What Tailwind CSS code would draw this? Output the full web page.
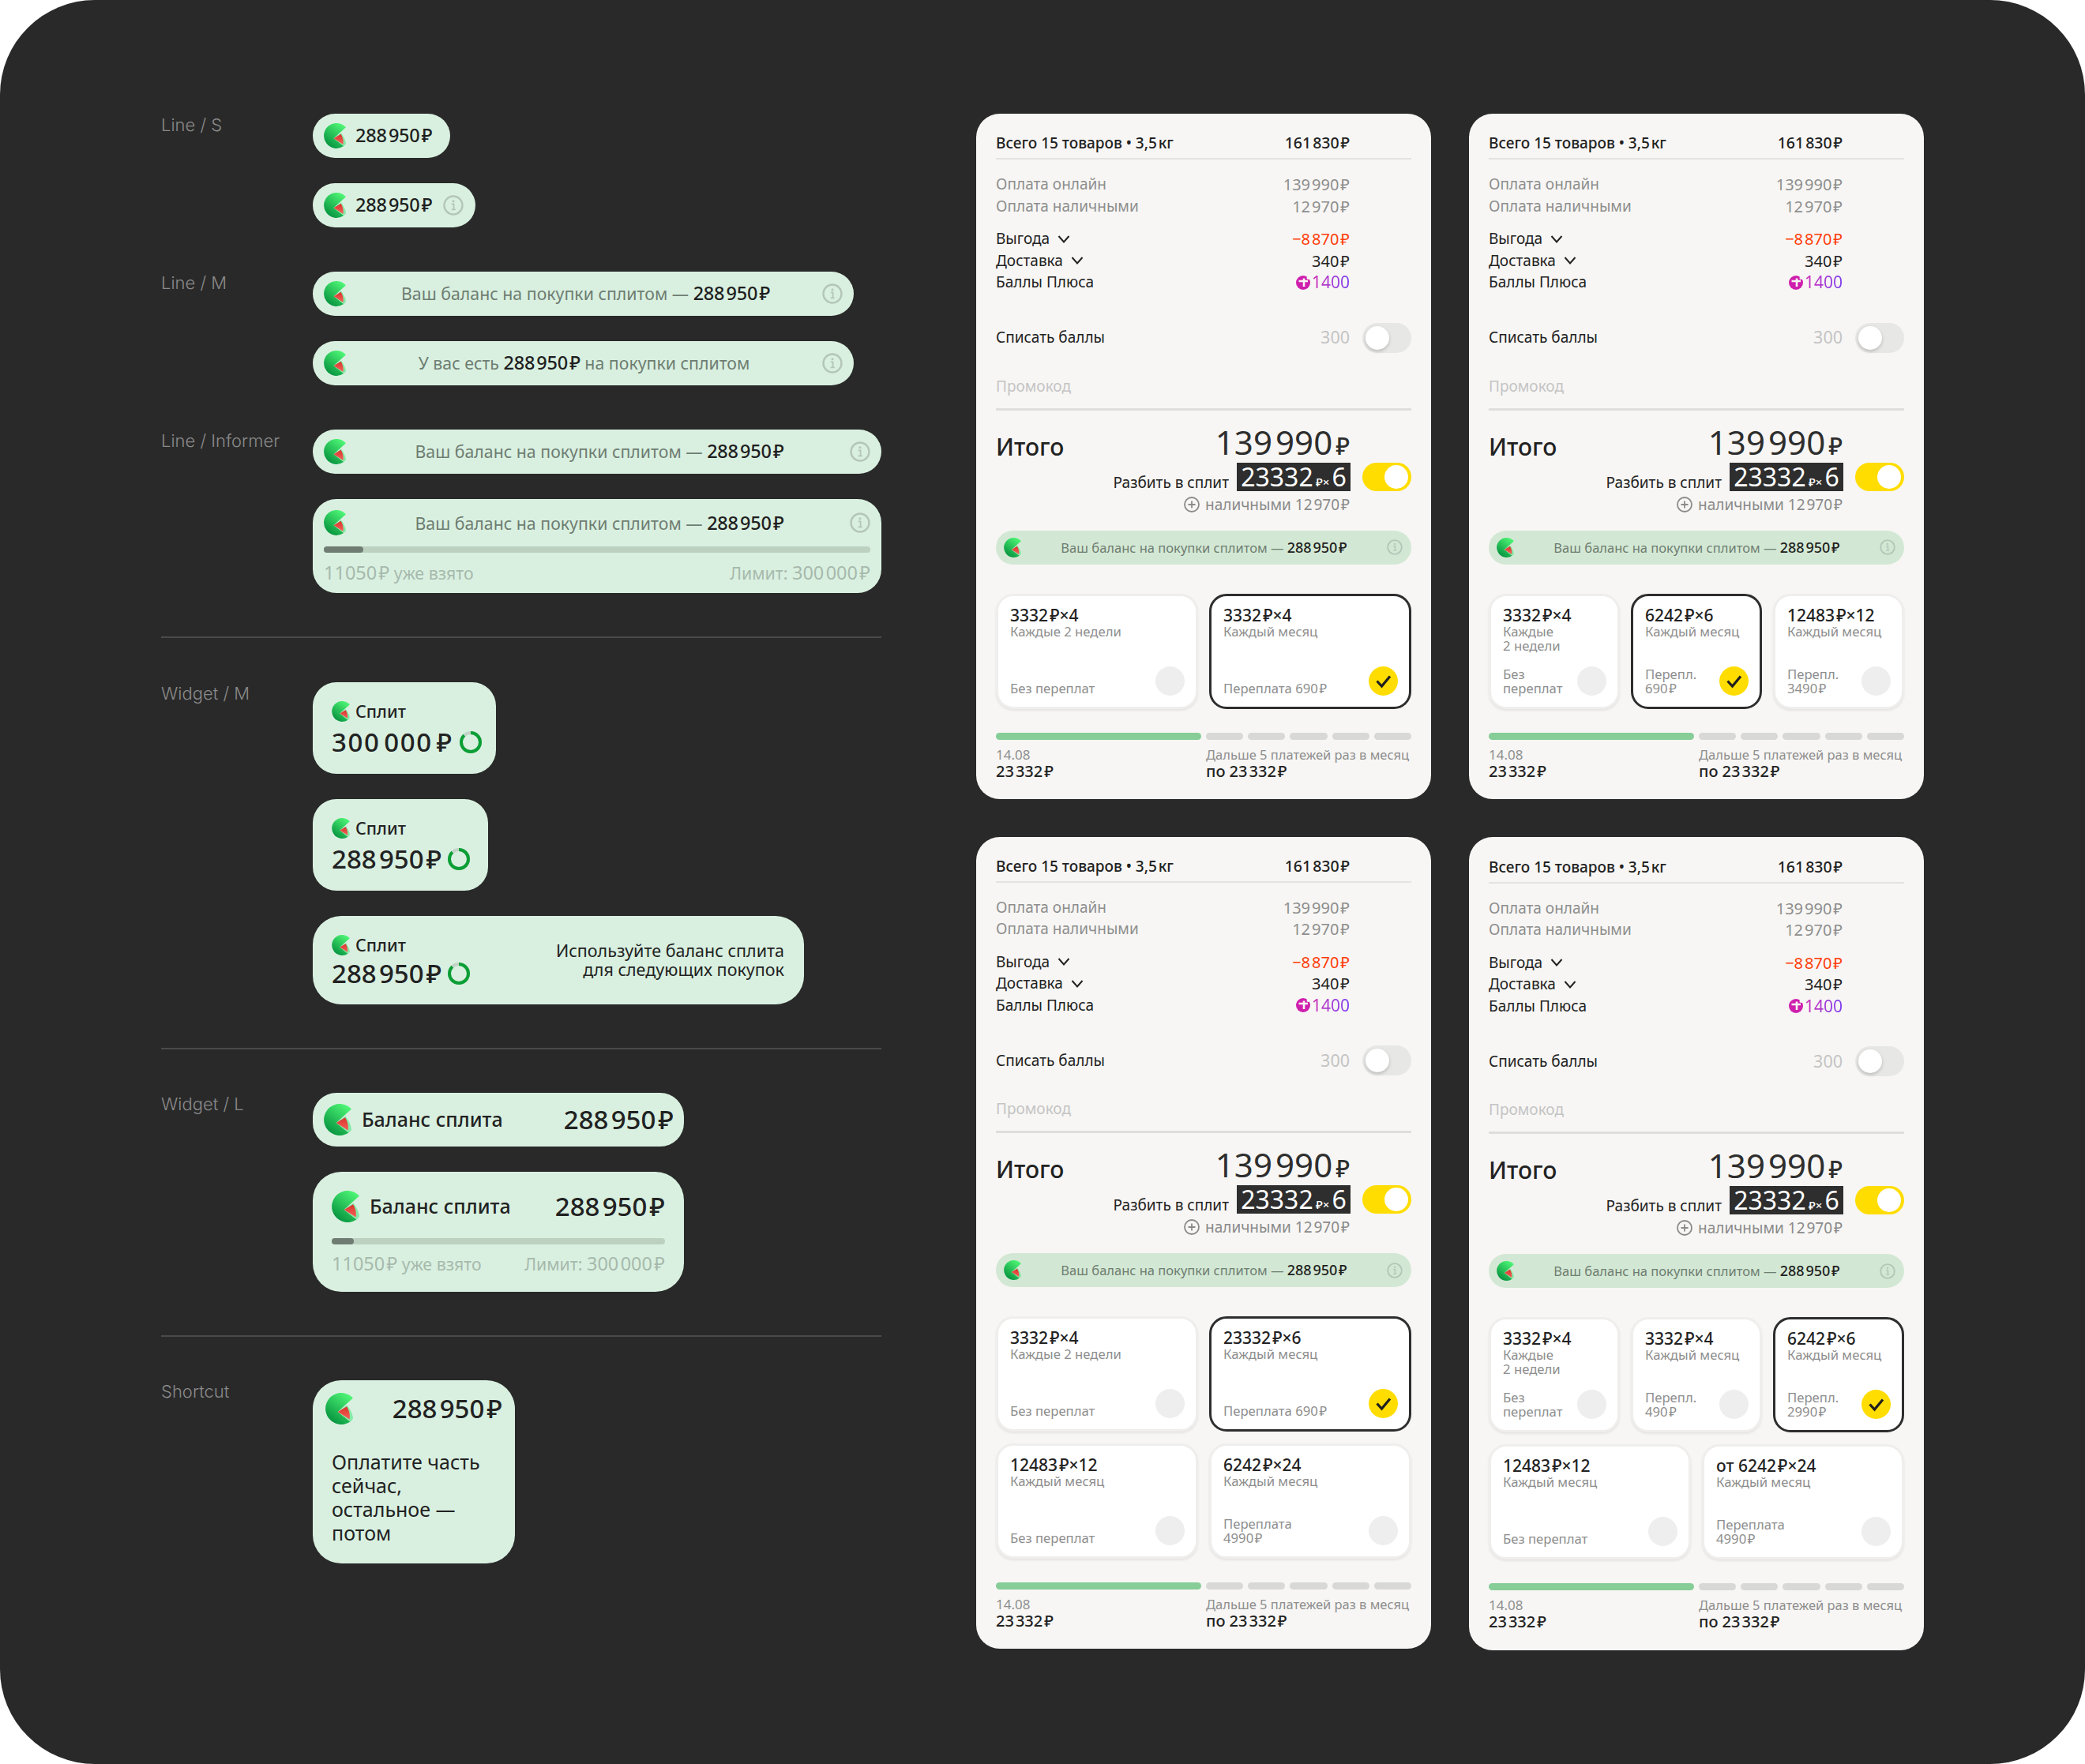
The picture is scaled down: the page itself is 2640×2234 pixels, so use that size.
<!DOCTYPE html>
<html lang="ru">
<head>
<meta charset="utf-8">
<title>Split</title>
<script src="https://cdn.jsdelivr.net/npm/@tailwindcss/browser@4"></script>
</head>
<body class="bg-white [font-family:'Noto_Sans',sans-serif]">
<svg class="absolute w-0 h-0">
  <defs>
    <linearGradient id="g" x1="0.85" y1="0.05" x2="0.25" y2="0.95"><stop offset="0" stop-color="#4ff776"/><stop offset="1" stop-color="#06933f"/></linearGradient>
    <linearGradient id="r" x1="0.6" y1="0" x2="0.6" y2="1"><stop offset="0" stop-color="#d9342b"/><stop offset="1" stop-color="#f4625a"/></linearGradient>
    <symbol id="m" viewBox="0 0 35 40">
      <path d="M35 6.6A20 20 0 1 0 31.5 36.4L15.7 24Z" fill="url(#g)"/>
      <path d="M15.7 24 27.4 15.6C31 20 34.6 27 35 32 34.4 34 33 35.6 31.5 36.4Z" fill="#86eaa8"/>
      <path d="M15.7 24 27 17.2C30 22 31.6 28 30.6 33.6Z" fill="url(#r)"/>
    </symbol>
    <symbol id="i" viewBox="0 0 26 26">
      <circle cx="13" cy="13" r="11.5" fill="none" stroke="currentColor" stroke-width="2.4"/>
      <circle cx="13" cy="7.8" r="1.5" fill="currentColor"/>
      <path d="M10.8 11.4H13.6V18M10.6 18.4H15.8" fill="none" stroke="currentColor" stroke-width="1.8"/>
    </symbol>
    <symbol id="ring" viewBox="0 0 28 28">
      <circle cx="14" cy="14" r="12" fill="none" stroke="#c3d4c7" stroke-width="4"/>
      <circle cx="14" cy="14" r="12" fill="none" stroke="#0a9f35" stroke-width="4" stroke-dasharray="66 76" transform="rotate(-90 14 14)"/>
    </symbol>
    <symbol id="chev" viewBox="0 0 16 12"><path d="M1.5 2 8 9.5 14.5 2" fill="none" stroke="#222" stroke-width="2"/></symbol>
    <symbol id="check" viewBox="0 0 37 37"><path d="M10.5 18.5 16.5 25 27 12.5" fill="none" stroke="#1f1f1f" stroke-width="3.2"/></symbol>
    <symbol id="plus" viewBox="0 0 20 20"><circle cx="10" cy="10" r="9" fill="none" stroke="#8a8a8a" stroke-width="1.8"/><path d="M10 5.5V14.5M5.5 10H14.5" stroke="#8a8a8a" stroke-width="1.8"/></symbol>
    <symbol id="pts" viewBox="0 0 18 18"><path d="M9 0A9 9 0 1 0 18 9 9 9 0 0 0 9 0Z" fill="#cf1fae"/><path d="M3.5 7H15M10 3.5V14" stroke="#f7f6f4" stroke-width="2.6"/><circle cx="15.5" cy="3" r="2" fill="#f7f6f4"/></symbol>
  </defs>
</svg>

<main class="w-[2640px] h-[2234px] rounded-[120px] bg-[#292929] flex gap-[120px] pl-[204px] pt-[144px] overflow-hidden">
  <!-- LEFT -->
  <section class="w-[912px] shrink-0 flex flex-col">
    <div class="flex">
      <h2 class="w-[192px] text-[22px] leading-[28px] font-light text-[#8a8a8a] [font-family:Inter,sans-serif]">Line / S</h2>
      <div class="flex flex-col items-start gap-8">
        <div class="h-14 rounded-full bg-[#d9f0e0] flex items-center pl-[14px] pr-[23px] gap-3"><svg class="w-7 h-8"><use href="#m"/></svg><span class="text-[23.5px] font-medium text-[#1f1f1f] tracking-[-0.2px]">288&#8202;950&#8202;₽</span></div>
        <div class="h-14 rounded-full bg-[#d9f0e0] flex items-center pl-[14px] pr-[15px] gap-3"><svg class="w-7 h-8"><use href="#m"/></svg><span class="text-[23.5px] font-medium text-[#1f1f1f] tracking-[-0.2px]">288&#8202;950&#8202;₽</span><svg class="w-[26px] h-[26px] ml-[2px] text-[#b4c6b8]"><use href="#i"/></svg></div>
      </div>
    </div>
    <div class="flex mt-14">
      <h2 class="w-[192px] text-[22px] leading-[28px] font-light text-[#8a8a8a] [font-family:Inter,sans-serif]">Line / M</h2>
      <div class="flex flex-col gap-8">
        <div class="w-[685px] h-14 rounded-full bg-[#d9f0e0] flex items-center px-[14px]"><svg class="w-7 h-8"><use href="#m"/></svg><p class="flex-1 pl-1 text-center text-[21.3px] text-[#6e7d72]">Ваш баланс на покупки сплитом — <b class="text-[23.5px] font-medium text-[#1f1f1f] tracking-[-0.2px]">288&#8202;950&#8202;₽</b></p><svg class="w-[26px] h-[26px] text-[#b4c6b8]"><use href="#i"/></svg></div>
        <div class="w-[685px] h-14 rounded-full bg-[#d9f0e0] flex items-center px-[14px]"><svg class="w-7 h-8"><use href="#m"/></svg><p class="flex-1 text-center text-[21.3px] text-[#6e7d72]">У вас есть <b class="text-[23.5px] font-medium text-[#1f1f1f] tracking-[-0.2px]">288&#8202;950&#8202;₽</b> на покупки сплитом</p><svg class="w-[26px] h-[26px] text-[#b4c6b8]"><use href="#i"/></svg></div>
      </div>
    </div>
    <div class="flex mt-14">
      <h2 class="w-[192px] text-[22px] leading-[28px] font-light text-[#8a8a8a] [font-family:Inter,sans-serif]">Line / Informer</h2>
      <div class="flex flex-col gap-8">
        <div class="w-[720px] h-14 rounded-full bg-[#d9f0e0] flex items-center px-[14px]"><svg class="w-7 h-8"><use href="#m"/></svg><p class="flex-1 pl-1 text-center text-[21.3px] text-[#6e7d72]">Ваш баланс на покупки сплитом — <b class="text-[23.5px] font-medium text-[#1f1f1f] tracking-[-0.2px]">288&#8202;950&#8202;₽</b></p><svg class="w-[26px] h-[26px] text-[#b4c6b8]"><use href="#i"/></svg></div>
        <div class="w-[720px] h-[119px] rounded-[30px] bg-[#d9f0e0] px-[14px] pt-[14px]">
          <div class="flex items-center h-8"><svg class="w-7 h-8"><use href="#m"/></svg><p class="flex-1 pl-1 text-center text-[21.3px] leading-[32px] text-[#6e7d72]">Ваш баланс на покупки сплитом — <b class="text-[23.5px] font-medium text-[#1f1f1f] tracking-[-0.2px]">288&#8202;950&#8202;₽</b></p><svg class="w-[26px] h-[26px] text-[#b4c6b8]"><use href="#i"/></svg></div>
          <div class="mt-[14px] h-2 rounded-full bg-[#bcd1c0]"><div class="w-[50px] h-2 rounded-full bg-[#6f7c72]"></div></div>
          <div class="mt-[9px] flex justify-between text-[21.3px] leading-[32px] text-[#a7b9ac]"><span><span class="text-[23.5px]">11050&#8202;₽</span> уже взято</span><span>Лимит: <span class="text-[23.5px]">300&#8202;000&#8202;₽</span></span></div>
        </div>
      </div>
    </div>
    <hr class="mt-[55px] border-0 h-[2px] bg-[#4a4a4a]">
    <div class="flex mt-[56px]">
      <h2 class="w-[192px] text-[22px] leading-[28px] font-light text-[#8a8a8a] [font-family:Inter,sans-serif]">Widget / M</h2>
      <div class="flex flex-col items-start gap-8">
        <div class="w-[232px] h-[116px] rounded-[30px] bg-[#d9f0e0] pl-6 pt-6">
          <div class="flex items-center gap-[7px]"><svg class="w-[23px] h-[26px]"><use href="#m"/></svg><span class="text-[21.5px] leading-[26px] font-medium text-[#222]">Сплит</span></div>
          <div class="flex items-center gap-[8px] mt-1"><span class="text-[33px] leading-[44px] font-medium text-[#222] tracking-[1.6px]">300&#8202;000&#8202;₽</span><svg class="w-7 h-7"><use href="#ring"/></svg></div>
        </div>
        <div class="w-[222px] h-[116px] rounded-[30px] bg-[#d9f0e0] pl-6 pt-6">
          <div class="flex items-center gap-[7px]"><svg class="w-[23px] h-[26px]"><use href="#m"/></svg><span class="text-[21.5px] leading-[26px] font-medium text-[#222]">Сплит</span></div>
          <div class="flex items-center gap-[8px] mt-1"><span class="text-[33px] leading-[44px] font-medium text-[#222]">288&#8202;950&#8202;₽</span><svg class="w-7 h-7"><use href="#ring"/></svg></div>
        </div>
        <div class="w-[622px] h-[112px] rounded-[36px] bg-[#d9f0e0] pl-6 pr-[25px] flex items-center justify-between">
          <div class="self-start mt-6">
            <div class="flex items-center gap-[7px]"><svg class="w-[23px] h-[26px]"><use href="#m"/></svg><span class="text-[21.5px] leading-[26px] font-medium text-[#222]">Сплит</span></div>
            <div class="flex items-center gap-[8px] mt-[1px]"><span class="text-[33px] leading-[44px] font-medium text-[#222]">288&#8202;950&#8202;₽</span><svg class="w-7 h-7"><use href="#ring"/></svg></div>
          </div>
          <p class="text-[21.5px] leading-[24px] text-right text-[#222]">Используйте баланс сплита<br>для следующих покупок</p>
        </div>
      </div>
    </div>
    <hr class="mt-[55px] border-0 h-[2px] bg-[#4a4a4a]">
    <div class="flex mt-[55px]">
      <h2 class="w-[192px] text-[22px] leading-[28px] font-light text-[#8a8a8a] [font-family:Inter,sans-serif]">Widget / L</h2>
      <div class="flex flex-col gap-8">
        <div class="w-[470px] h-[68px] rounded-[30px] bg-[#d9f0e0] pl-[14px] pr-[13px] flex items-center"><svg class="w-[35px] h-10"><use href="#m"/></svg><span class="ml-[13px] text-[25px] font-medium text-[#222]">Баланс сплита</span><span class="ml-auto text-[33px] font-medium text-[#222]">288&#8202;950&#8202;₽</span></div>
        <div class="w-[470px] h-[152px] rounded-[36px] bg-[#d9f0e0] px-6 pt-6">
          <div class="flex items-center h-10"><svg class="w-[35px] h-10"><use href="#m"/></svg><span class="ml-[13px] text-[25px] font-medium text-[#222]">Баланс сплита</span><span class="ml-auto text-[33px] font-medium text-[#222]">288&#8202;950&#8202;₽</span></div>
          <div class="mt-5 h-2 rounded-full bg-[#bcd1c0]"><div class="w-7 h-2 rounded-full bg-[#6f7c72]"></div></div>
          <div class="mt-2 flex justify-between text-[21.3px] leading-[32px] text-[#a7b9ac]"><span><span class="text-[23.5px]">11050&#8202;₽</span> уже взято</span><span>Лимит: <span class="text-[23.5px]">300&#8202;000&#8202;₽</span></span></div>
        </div>
      </div>
    </div>
    <hr class="mt-[55px] border-0 h-[2px] bg-[#4a4a4a]">
    <div class="flex mt-[55px]">
      <h2 class="w-[192px] text-[22px] leading-[28px] font-light text-[#8a8a8a] [font-family:Inter,sans-serif]">Shortcut</h2>
      <div class="w-[256px] h-[232px] rounded-[36px] bg-[#d9f0e0] pl-6 pr-4 pt-4">
        <div class="flex items-center h-10 -ml-2"><svg class="w-[35px] h-10"><use href="#m"/></svg><span class="ml-auto text-[33px] font-medium text-[#222]">288&#8202;950&#8202;₽</span></div>
        <p class="mt-8 text-[25px] leading-[30px] text-[#222]">Оплатите часть<br>сейчас,<br>остальное —<br>потом</p>
      </div>
    </div>
  </section>

  <!-- RIGHT -->
  <section class="grid grid-cols-[576px_576px] gap-x-12 gap-y-12 items-start content-start">

    <!-- Card 1 -->
    <article class="rounded-[30px] bg-[#f7f6f4] px-[25px] pt-[23px] pb-[24px] text-[19px] text-[#222]">
      <div class="flex justify-between pr-[78px] leading-[28px] font-medium"><span>Всего 15 товаров • 3,5&#8202;кг</span><span class="text-[19.5px]">161&#8202;830&#8202;₽</span></div>
      <hr class="mt-[5px] mb-[18px] border-0 h-[2px] bg-[#e4e3e1]">
      <div class="flex justify-between pr-[78px] leading-[27.5px] text-[#8e8e8e]"><span>Оплата онлайн</span><span class="text-[20px]">139&#8202;990&#8202;₽</span></div>
      <div class="flex justify-between pr-[78px] leading-[27.5px] text-[#8e8e8e]"><span>Оплата наличными</span><span class="text-[20px]">12&#8202;970&#8202;₽</span></div>
      <div class="mt-[14px] flex justify-between pr-[78px] leading-[27.5px]"><span class="flex items-center gap-[10px]">Выгода<svg class="w-4 h-3"><use href="#chev"/></svg></span><span class="text-[20px] text-[#ff3d0a]">−8&#8202;870&#8202;₽</span></div>
      <div class="flex justify-between pr-[78px] leading-[27.5px]"><span class="flex items-center gap-[10px]">Доставка<svg class="w-4 h-3"><use href="#chev"/></svg></span><span class="text-[20px]">340&#8202;₽</span></div>
      <div class="flex justify-between pr-[78px] leading-[27.5px]"><span>Баллы Плюса</span><span class="flex items-center gap-[2px]"><svg class="w-[18px] h-[18px]"><use href="#pts"/></svg><span class="text-[21px] bg-linear-to-r from-[#d022b4] to-[#7b3cf0] bg-clip-text text-transparent">1400</span></span></div>
      <div class="mt-[37px] flex items-center justify-between h-[38px]"><span>Списать баллы</span><span class="flex items-center gap-4"><span class="text-[21.5px] text-[#c4c4c4]">300</span><span class="w-[62px] h-[38px] rounded-full bg-[#e7e7e5] flex items-center pl-1"><span class="w-[30px] h-[30px] rounded-full bg-white shadow-[0_2px_4px_rgba(0,0,0,0.2)]"></span></span></span></div>
      <p class="mt-[28px] leading-[28px] text-[#c4c4c4]">Промокод</p>
      <hr class="mt-[14px] border-0 h-[3px] bg-[#dfdedc]">
      <div class="mt-[15px] flex justify-between pr-[78px] h-[50px]"><span class="text-[30px] font-medium leading-[62px]">Итого</span><span class="text-[42px] leading-[50px] text-[#2e2e2e]">139&#8202;990&#8202;<span class="text-[30px] font-medium">₽</span></span></div>
      <div class="mt-[1px] h-9 flex items-end justify-end gap-[15px]"><span class="text-[19px] leading-[22px]">Разбить в сплит</span><span class="ml-[-5px] w-[144px] h-9 bg-[#2e2e2e] text-white text-center text-[32px] leading-[36px]">23332&#8202;<span class="text-[15px] font-medium">₽×</span>&#8202;6</span><span class="w-[62px] h-9 rounded-full bg-[#ffdd00] flex items-center justify-end pr-1"><span class="w-[30px] h-[30px] rounded-full bg-white"></span></span></div>
      <div class="mt-[3px] pr-[78px] flex items-center justify-end gap-[7px] text-[19px] leading-[28px] text-[#8a8a8a]"><svg class="w-5 h-5"><use href="#plus"/></svg>наличными 12&#8202;970&#8202;₽</div>
      <div class="mt-[19px] h-[43px] rounded-full bg-[#d3e8d4] flex items-center pl-[10px] pr-[11px]"><svg class="w-[22px] h-[25px]"><use href="#m"/></svg><p class="flex-1 text-center text-[16.5px] text-[#6e7d72]">Ваш баланс на покупки сплитом — <b class="text-[18px] font-medium text-[#1f1f1f]">288&#8202;950&#8202;₽</b></p><svg class="w-5 h-5 text-[#b4c6b8]"><use href="#i"/></svg></div>
      <div class="mt-[37px] grid grid-cols-2 gap-x-[14px] gap-y-[15px]">
        <div class="h-[146px] rounded-[22px] border-[3px] border-[#efeeec] bg-white shadow-[0_2px_3px_rgba(0,0,0,0.08)] pl-[15px] pr-[14px] pt-[12px] pb-[14px] flex flex-col justify-between"><div><p class="text-[21px] leading-[24px] font-medium text-[#222]">3332&#8202;₽×4</p><p class="text-[16.7px] leading-[18px] text-[#8e8e8e]">Каждые 2 недели</p></div><div class="flex items-end justify-between"><p class="text-[16.7px] leading-[18px] text-[#8e8e8e]">Без переплат</p><span class="w-[37px] h-[37px] rounded-full bg-[#eeeeee]"></span></div></div>
        <div class="h-[146px] rounded-[22px] border-[3px] border-[#2e2e2e] bg-white pl-[15px] pr-[14px] pt-[12px] pb-[14px] flex flex-col justify-between"><div><p class="text-[21px] leading-[24px] font-medium text-[#222]">3332&#8202;₽×4</p><p class="text-[16.7px] leading-[18px] text-[#8e8e8e]">Каждый месяц</p></div><div class="flex items-end justify-between"><p class="text-[16.7px] leading-[18px] text-[#8e8e8e]">Переплата 690&#8202;₽</p><svg class="w-[37px] h-[37px] rounded-full bg-[#ffdd00]"><use href="#check"/></svg></div></div>
      </div>
      <div class="mt-[30px] flex gap-[6px]"><span class="w-[260px] h-[9px] rounded-full bg-[#86cd97]"></span><span class="flex-1 h-[9px] rounded-full bg-[#d8d8d6]"></span><span class="flex-1 h-[9px] rounded-full bg-[#d8d8d6]"></span><span class="flex-1 h-[9px] rounded-full bg-[#d8d8d6]"></span><span class="flex-1 h-[9px] rounded-full bg-[#d8d8d6]"></span><span class="flex-1 h-[9px] rounded-full bg-[#d8d8d6]"></span></div>
      <div class="mt-[9px] flex gap-[6px]"><div class="w-[260px] shrink-0"><p class="text-[17px] leading-[20px] text-[#8e8e8e]">14.08</p><p class="text-[20px] leading-[22px] font-medium">23&#8202;332&#8202;₽</p></div><div class="whitespace-nowrap"><p class="text-[16.5px] leading-[20px] text-[#8e8e8e]">Дальше 5 платежей раз в месяц</p><p class="text-[20px] leading-[22px] font-medium">по 23&#8202;332&#8202;₽</p></div></div>
    </article>

    <!-- Card 2 -->
    <article class="rounded-[30px] bg-[#f7f6f4] px-[25px] pt-[23px] pb-[24px] text-[19px] text-[#222]">
      <div class="flex justify-between pr-[78px] leading-[28px] font-medium"><span>Всего 15 товаров • 3,5&#8202;кг</span><span class="text-[19.5px]">161&#8202;830&#8202;₽</span></div>
      <hr class="mt-[5px] mb-[18px] border-0 h-[2px] bg-[#e4e3e1]">
      <div class="flex justify-between pr-[78px] leading-[27.5px] text-[#8e8e8e]"><span>Оплата онлайн</span><span class="text-[20px]">139&#8202;990&#8202;₽</span></div>
      <div class="flex justify-between pr-[78px] leading-[27.5px] text-[#8e8e8e]"><span>Оплата наличными</span><span class="text-[20px]">12&#8202;970&#8202;₽</span></div>
      <div class="mt-[14px] flex justify-between pr-[78px] leading-[27.5px]"><span class="flex items-center gap-[10px]">Выгода<svg class="w-4 h-3"><use href="#chev"/></svg></span><span class="text-[20px] text-[#ff3d0a]">−8&#8202;870&#8202;₽</span></div>
      <div class="flex justify-between pr-[78px] leading-[27.5px]"><span class="flex items-center gap-[10px]">Доставка<svg class="w-4 h-3"><use href="#chev"/></svg></span><span class="text-[20px]">340&#8202;₽</span></div>
      <div class="flex justify-between pr-[78px] leading-[27.5px]"><span>Баллы Плюса</span><span class="flex items-center gap-[2px]"><svg class="w-[18px] h-[18px]"><use href="#pts"/></svg><span class="text-[21px] bg-linear-to-r from-[#d022b4] to-[#7b3cf0] bg-clip-text text-transparent">1400</span></span></div>
      <div class="mt-[37px] flex items-center justify-between h-[38px]"><span>Списать баллы</span><span class="flex items-center gap-4"><span class="text-[21.5px] text-[#c4c4c4]">300</span><span class="w-[62px] h-[38px] rounded-full bg-[#e7e7e5] flex items-center pl-1"><span class="w-[30px] h-[30px] rounded-full bg-white shadow-[0_2px_4px_rgba(0,0,0,0.2)]"></span></span></span></div>
      <p class="mt-[28px] leading-[28px] text-[#c4c4c4]">Промокод</p>
      <hr class="mt-[14px] border-0 h-[3px] bg-[#dfdedc]">
      <div class="mt-[15px] flex justify-between pr-[78px] h-[50px]"><span class="text-[30px] font-medium leading-[62px]">Итого</span><span class="text-[42px] leading-[50px] text-[#2e2e2e]">139&#8202;990&#8202;<span class="text-[30px] font-medium">₽</span></span></div>
      <div class="mt-[1px] h-9 flex items-end justify-end gap-[15px]"><span class="text-[19px] leading-[22px]">Разбить в сплит</span><span class="ml-[-5px] w-[144px] h-9 bg-[#2e2e2e] text-white text-center text-[32px] leading-[36px]">23332&#8202;<span class="text-[15px] font-medium">₽×</span>&#8202;6</span><span class="w-[62px] h-9 rounded-full bg-[#ffdd00] flex items-center justify-end pr-1"><span class="w-[30px] h-[30px] rounded-full bg-white"></span></span></div>
      <div class="mt-[3px] pr-[78px] flex items-center justify-end gap-[7px] text-[19px] leading-[28px] text-[#8a8a8a]"><svg class="w-5 h-5"><use href="#plus"/></svg>наличными 12&#8202;970&#8202;₽</div>
      <div class="mt-[19px] h-[43px] rounded-full bg-[#d3e8d4] flex items-center pl-[10px] pr-[11px]"><svg class="w-[22px] h-[25px]"><use href="#m"/></svg><p class="flex-1 text-center text-[16.5px] text-[#6e7d72]">Ваш баланс на покупки сплитом — <b class="text-[18px] font-medium text-[#1f1f1f]">288&#8202;950&#8202;₽</b></p><svg class="w-5 h-5 text-[#b4c6b8]"><use href="#i"/></svg></div>
      <div class="mt-[37px] grid grid-cols-3 gap-x-[14px] gap-y-[15px]">
        <div class="h-[146px] rounded-[22px] border-[3px] border-[#efeeec] bg-white shadow-[0_2px_3px_rgba(0,0,0,0.08)] pl-[15px] pr-[14px] pt-[12px] pb-[14px] flex flex-col justify-between"><div><p class="text-[21px] leading-[24px] font-medium text-[#222]">3332&#8202;₽×4</p><p class="text-[16.7px] leading-[18px] text-[#8e8e8e]">Каждые<br>2 недели</p></div><div class="flex items-end justify-between"><p class="text-[16.7px] leading-[18px] text-[#8e8e8e]">Без<br>переплат</p><span class="w-[37px] h-[37px] rounded-full bg-[#eeeeee]"></span></div></div>
        <div class="h-[146px] rounded-[22px] border-[3px] border-[#2e2e2e] bg-white pl-[15px] pr-[14px] pt-[12px] pb-[14px] flex flex-col justify-between"><div><p class="text-[21px] leading-[24px] font-medium text-[#222]">6242&#8202;₽×6</p><p class="text-[16.7px] leading-[18px] text-[#8e8e8e]">Каждый месяц</p></div><div class="flex items-end justify-between"><p class="text-[16.7px] leading-[18px] text-[#8e8e8e]">Перепл.<br>690&#8202;₽</p><svg class="w-[37px] h-[37px] rounded-full bg-[#ffdd00]"><use href="#check"/></svg></div></div>
        <div class="h-[146px] rounded-[22px] border-[3px] border-[#efeeec] bg-white shadow-[0_2px_3px_rgba(0,0,0,0.08)] pl-[15px] pr-[14px] pt-[12px] pb-[14px] flex flex-col justify-between"><div><p class="text-[21px] leading-[24px] font-medium text-[#222]">12483&#8202;₽×12</p><p class="text-[16.7px] leading-[18px] text-[#8e8e8e]">Каждый месяц</p></div><div class="flex items-end justify-between"><p class="text-[16.7px] leading-[18px] text-[#8e8e8e]">Перепл.<br>3490&#8202;₽</p><span class="w-[37px] h-[37px] rounded-full bg-[#eeeeee]"></span></div></div>
      </div>
      <div class="mt-[30px] flex gap-[6px]"><span class="w-[260px] h-[9px] rounded-full bg-[#86cd97]"></span><span class="flex-1 h-[9px] rounded-full bg-[#d8d8d6]"></span><span class="flex-1 h-[9px] rounded-full bg-[#d8d8d6]"></span><span class="flex-1 h-[9px] rounded-full bg-[#d8d8d6]"></span><span class="flex-1 h-[9px] rounded-full bg-[#d8d8d6]"></span><span class="flex-1 h-[9px] rounded-full bg-[#d8d8d6]"></span></div>
      <div class="mt-[9px] flex gap-[6px]"><div class="w-[260px] shrink-0"><p class="text-[17px] leading-[20px] text-[#8e8e8e]">14.08</p><p class="text-[20px] leading-[22px] font-medium">23&#8202;332&#8202;₽</p></div><div class="whitespace-nowrap"><p class="text-[16.5px] leading-[20px] text-[#8e8e8e]">Дальше 5 платежей раз в месяц</p><p class="text-[20px] leading-[22px] font-medium">по 23&#8202;332&#8202;₽</p></div></div>
    </article>

    <!-- Card 3 -->
    <article class="rounded-[30px] bg-[#f7f6f4] px-[25px] pt-[23px] pb-[24px] text-[19px] text-[#222]">
      <div class="flex justify-between pr-[78px] leading-[28px] font-medium"><span>Всего 15 товаров • 3,5&#8202;кг</span><span class="text-[19.5px]">161&#8202;830&#8202;₽</span></div>
      <hr class="mt-[5px] mb-[18px] border-0 h-[2px] bg-[#e4e3e1]">
      <div class="flex justify-between pr-[78px] leading-[27.5px] text-[#8e8e8e]"><span>Оплата онлайн</span><span class="text-[20px]">139&#8202;990&#8202;₽</span></div>
      <div class="flex justify-between pr-[78px] leading-[27.5px] text-[#8e8e8e]"><span>Оплата наличными</span><span class="text-[20px]">12&#8202;970&#8202;₽</span></div>
      <div class="mt-[14px] flex justify-between pr-[78px] leading-[27.5px]"><span class="flex items-center gap-[10px]">Выгода<svg class="w-4 h-3"><use href="#chev"/></svg></span><span class="text-[20px] text-[#ff3d0a]">−8&#8202;870&#8202;₽</span></div>
      <div class="flex justify-between pr-[78px] leading-[27.5px]"><span class="flex items-center gap-[10px]">Доставка<svg class="w-4 h-3"><use href="#chev"/></svg></span><span class="text-[20px]">340&#8202;₽</span></div>
      <div class="flex justify-between pr-[78px] leading-[27.5px]"><span>Баллы Плюса</span><span class="flex items-center gap-[2px]"><svg class="w-[18px] h-[18px]"><use href="#pts"/></svg><span class="text-[21px] bg-linear-to-r from-[#d022b4] to-[#7b3cf0] bg-clip-text text-transparent">1400</span></span></div>
      <div class="mt-[37px] flex items-center justify-between h-[38px]"><span>Списать баллы</span><span class="flex items-center gap-4"><span class="text-[21.5px] text-[#c4c4c4]">300</span><span class="w-[62px] h-[38px] rounded-full bg-[#e7e7e5] flex items-center pl-1"><span class="w-[30px] h-[30px] rounded-full bg-white shadow-[0_2px_4px_rgba(0,0,0,0.2)]"></span></span></span></div>
      <p class="mt-[28px] leading-[28px] text-[#c4c4c4]">Промокод</p>
      <hr class="mt-[14px] border-0 h-[3px] bg-[#dfdedc]">
      <div class="mt-[15px] flex justify-between pr-[78px] h-[50px]"><span class="text-[30px] font-medium leading-[62px]">Итого</span><span class="text-[42px] leading-[50px] text-[#2e2e2e]">139&#8202;990&#8202;<span class="text-[30px] font-medium">₽</span></span></div>
      <div class="mt-[1px] h-9 flex items-end justify-end gap-[15px]"><span class="text-[19px] leading-[22px]">Разбить в сплит</span><span class="ml-[-5px] w-[144px] h-9 bg-[#2e2e2e] text-white text-center text-[32px] leading-[36px]">23332&#8202;<span class="text-[15px] font-medium">₽×</span>&#8202;6</span><span class="w-[62px] h-9 rounded-full bg-[#ffdd00] flex items-center justify-end pr-1"><span class="w-[30px] h-[30px] rounded-full bg-white"></span></span></div>
      <div class="mt-[3px] pr-[78px] flex items-center justify-end gap-[7px] text-[19px] leading-[28px] text-[#8a8a8a]"><svg class="w-5 h-5"><use href="#plus"/></svg>наличными 12&#8202;970&#8202;₽</div>
      <div class="mt-[19px] h-[43px] rounded-full bg-[#d3e8d4] flex items-center pl-[10px] pr-[11px]"><svg class="w-[22px] h-[25px]"><use href="#m"/></svg><p class="flex-1 text-center text-[16.5px] text-[#6e7d72]">Ваш баланс на покупки сплитом — <b class="text-[18px] font-medium text-[#1f1f1f]">288&#8202;950&#8202;₽</b></p><svg class="w-5 h-5 text-[#b4c6b8]"><use href="#i"/></svg></div>
      <div class="mt-[37px] grid grid-cols-2 gap-x-[14px] gap-y-[15px]">
        <div class="h-[146px] rounded-[22px] border-[3px] border-[#efeeec] bg-white shadow-[0_2px_3px_rgba(0,0,0,0.08)] pl-[15px] pr-[14px] pt-[12px] pb-[14px] flex flex-col justify-between"><div><p class="text-[21px] leading-[24px] font-medium text-[#222]">3332&#8202;₽×4</p><p class="text-[16.7px] leading-[18px] text-[#8e8e8e]">Каждые 2 недели</p></div><div class="flex items-end justify-between"><p class="text-[16.7px] leading-[18px] text-[#8e8e8e]">Без переплат</p><span class="w-[37px] h-[37px] rounded-full bg-[#eeeeee]"></span></div></div>
        <div class="h-[146px] rounded-[22px] border-[3px] border-[#2e2e2e] bg-white pl-[15px] pr-[14px] pt-[12px] pb-[14px] flex flex-col justify-between"><div><p class="text-[21px] leading-[24px] font-medium text-[#222]">23332&#8202;₽×6</p><p class="text-[16.7px] leading-[18px] text-[#8e8e8e]">Каждый месяц</p></div><div class="flex items-end justify-between"><p class="text-[16.7px] leading-[18px] text-[#8e8e8e]">Переплата 690&#8202;₽</p><svg class="w-[37px] h-[37px] rounded-full bg-[#ffdd00]"><use href="#check"/></svg></div></div>
        <div class="h-[146px] rounded-[22px] border-[3px] border-[#efeeec] bg-white shadow-[0_2px_3px_rgba(0,0,0,0.08)] pl-[15px] pr-[14px] pt-[12px] pb-[14px] flex flex-col justify-between"><div><p class="text-[21px] leading-[24px] font-medium text-[#222]">12483&#8202;₽×12</p><p class="text-[16.7px] leading-[18px] text-[#8e8e8e]">Каждый месяц</p></div><div class="flex items-end justify-between"><p class="text-[16.7px] leading-[18px] text-[#8e8e8e]">Без переплат</p><span class="w-[37px] h-[37px] rounded-full bg-[#eeeeee]"></span></div></div>
        <div class="h-[146px] rounded-[22px] border-[3px] border-[#efeeec] bg-white shadow-[0_2px_3px_rgba(0,0,0,0.08)] pl-[15px] pr-[14px] pt-[12px] pb-[14px] flex flex-col justify-between"><div><p class="text-[21px] leading-[24px] font-medium text-[#222]">6242&#8202;₽×24</p><p class="text-[16.7px] leading-[18px] text-[#8e8e8e]">Каждый месяц</p></div><div class="flex items-end justify-between"><p class="text-[16.7px] leading-[18px] text-[#8e8e8e]">Переплата<br>4990&#8202;₽</p><span class="w-[37px] h-[37px] rounded-full bg-[#eeeeee]"></span></div></div>
      </div>
      <div class="mt-[30px] flex gap-[6px]"><span class="w-[260px] h-[9px] rounded-full bg-[#86cd97]"></span><span class="flex-1 h-[9px] rounded-full bg-[#d8d8d6]"></span><span class="flex-1 h-[9px] rounded-full bg-[#d8d8d6]"></span><span class="flex-1 h-[9px] rounded-full bg-[#d8d8d6]"></span><span class="flex-1 h-[9px] rounded-full bg-[#d8d8d6]"></span><span class="flex-1 h-[9px] rounded-full bg-[#d8d8d6]"></span></div>
      <div class="mt-[9px] flex gap-[6px]"><div class="w-[260px] shrink-0"><p class="text-[17px] leading-[20px] text-[#8e8e8e]">14.08</p><p class="text-[20px] leading-[22px] font-medium">23&#8202;332&#8202;₽</p></div><div class="whitespace-nowrap"><p class="text-[16.5px] leading-[20px] text-[#8e8e8e]">Дальше 5 платежей раз в месяц</p><p class="text-[20px] leading-[22px] font-medium">по 23&#8202;332&#8202;₽</p></div></div>
    </article>

    <!-- Card 4 -->
    <article class="rounded-[30px] bg-[#f7f6f4] px-[25px] pt-[24px] pb-[25px] text-[19px] text-[#222]">
      <div class="flex justify-between pr-[78px] leading-[28px] font-medium"><span>Всего 15 товаров • 3,5&#8202;кг</span><span class="text-[19.5px]">161&#8202;830&#8202;₽</span></div>
      <hr class="mt-[5px] mb-[18px] border-0 h-[2px] bg-[#e4e3e1]">
      <div class="flex justify-between pr-[78px] leading-[27.5px] text-[#8e8e8e]"><span>Оплата онлайн</span><span class="text-[20px]">139&#8202;990&#8202;₽</span></div>
      <div class="flex justify-between pr-[78px] leading-[27.5px] text-[#8e8e8e]"><span>Оплата наличными</span><span class="text-[20px]">12&#8202;970&#8202;₽</span></div>
      <div class="mt-[14px] flex justify-between pr-[78px] leading-[27.5px]"><span class="flex items-center gap-[10px]">Выгода<svg class="w-4 h-3"><use href="#chev"/></svg></span><span class="text-[20px] text-[#ff3d0a]">−8&#8202;870&#8202;₽</span></div>
      <div class="flex justify-between pr-[78px] leading-[27.5px]"><span class="flex items-center gap-[10px]">Доставка<svg class="w-4 h-3"><use href="#chev"/></svg></span><span class="text-[20px]">340&#8202;₽</span></div>
      <div class="flex justify-between pr-[78px] leading-[27.5px]"><span>Баллы Плюса</span><span class="flex items-center gap-[2px]"><svg class="w-[18px] h-[18px]"><use href="#pts"/></svg><span class="text-[21px] bg-linear-to-r from-[#d022b4] to-[#7b3cf0] bg-clip-text text-transparent">1400</span></span></div>
      <div class="mt-[37px] flex items-center justify-between h-[38px]"><span>Списать баллы</span><span class="flex items-center gap-4"><span class="text-[21.5px] text-[#c4c4c4]">300</span><span class="w-[62px] h-[38px] rounded-full bg-[#e7e7e5] flex items-center pl-1"><span class="w-[30px] h-[30px] rounded-full bg-white shadow-[0_2px_4px_rgba(0,0,0,0.2)]"></span></span></span></div>
      <p class="mt-[28px] leading-[28px] text-[#c4c4c4]">Промокод</p>
      <hr class="mt-[14px] border-0 h-[3px] bg-[#dfdedc]">
      <div class="mt-[15px] flex justify-between pr-[78px] h-[50px]"><span class="text-[30px] font-medium leading-[62px]">Итого</span><span class="text-[42px] leading-[50px] text-[#2e2e2e]">139&#8202;990&#8202;<span class="text-[30px] font-medium">₽</span></span></div>
      <div class="mt-[1px] h-9 flex items-end justify-end gap-[15px]"><span class="text-[19px] leading-[22px]">Разбить в сплит</span><span class="ml-[-5px] w-[144px] h-9 bg-[#2e2e2e] text-white text-center text-[32px] leading-[36px]">23332&#8202;<span class="text-[15px] font-medium">₽×</span>&#8202;6</span><span class="w-[62px] h-9 rounded-full bg-[#ffdd00] flex items-center justify-end pr-1"><span class="w-[30px] h-[30px] rounded-full bg-white"></span></span></div>
      <div class="mt-[3px] pr-[78px] flex items-center justify-end gap-[7px] text-[19px] leading-[28px] text-[#8a8a8a]"><svg class="w-5 h-5"><use href="#plus"/></svg>наличными 12&#8202;970&#8202;₽</div>
      <div class="mt-[19px] h-[43px] rounded-full bg-[#d3e8d4] flex items-center pl-[10px] pr-[11px]"><svg class="w-[22px] h-[25px]"><use href="#m"/></svg><p class="flex-1 text-center text-[16.5px] text-[#6e7d72]">Ваш баланс на покупки сплитом — <b class="text-[18px] font-medium text-[#1f1f1f]">288&#8202;950&#8202;₽</b></p><svg class="w-5 h-5 text-[#b4c6b8]"><use href="#i"/></svg></div>
      <div class="mt-[37px] flex flex-col gap-y-[15px]">
        <div class="grid grid-cols-3 gap-x-[14px]">
          <div class="h-[146px] rounded-[22px] border-[3px] border-[#efeeec] bg-white shadow-[0_2px_3px_rgba(0,0,0,0.08)] pl-[15px] pr-[14px] pt-[12px] pb-[14px] flex flex-col justify-between"><div><p class="text-[21px] leading-[24px] font-medium text-[#222]">3332&#8202;₽×4</p><p class="text-[16.7px] leading-[18px] text-[#8e8e8e]">Каждые<br>2 недели</p></div><div class="flex items-end justify-between"><p class="text-[16.7px] leading-[18px] text-[#8e8e8e]">Без<br>переплат</p><span class="w-[37px] h-[37px] rounded-full bg-[#eeeeee]"></span></div></div>
          <div class="h-[146px] rounded-[22px] border-[3px] border-[#efeeec] bg-white shadow-[0_2px_3px_rgba(0,0,0,0.08)] pl-[15px] pr-[14px] pt-[12px] pb-[14px] flex flex-col justify-between"><div><p class="text-[21px] leading-[24px] font-medium text-[#222]">3332&#8202;₽×4</p><p class="text-[16.7px] leading-[18px] text-[#8e8e8e]">Каждый месяц</p></div><div class="flex items-end justify-between"><p class="text-[16.7px] leading-[18px] text-[#8e8e8e]">Перепл.<br>490&#8202;₽</p><span class="w-[37px] h-[37px] rounded-full bg-[#eeeeee]"></span></div></div>
          <div class="h-[146px] rounded-[22px] border-[3px] border-[#2e2e2e] bg-white pl-[15px] pr-[14px] pt-[12px] pb-[14px] flex flex-col justify-between"><div><p class="text-[21px] leading-[24px] font-medium text-[#222]">6242&#8202;₽×6</p><p class="text-[16.7px] leading-[18px] text-[#8e8e8e]">Каждый месяц</p></div><div class="flex items-end justify-between"><p class="text-[16.7px] leading-[18px] text-[#8e8e8e]">Перепл.<br>2990&#8202;₽</p><svg class="w-[37px] h-[37px] rounded-full bg-[#ffdd00]"><use href="#check"/></svg></div></div>
        </div>
        <div class="grid grid-cols-2 gap-x-[14px]">
          <div class="h-[146px] rounded-[22px] border-[3px] border-[#efeeec] bg-white shadow-[0_2px_3px_rgba(0,0,0,0.08)] pl-[15px] pr-[14px] pt-[12px] pb-[14px] flex flex-col justify-between"><div><p class="text-[21px] leading-[24px] font-medium text-[#222]">12483&#8202;₽×12</p><p class="text-[16.7px] leading-[18px] text-[#8e8e8e]">Каждый месяц</p></div><div class="flex items-end justify-between"><p class="text-[16.7px] leading-[18px] text-[#8e8e8e]">Без переплат</p><span class="w-[37px] h-[37px] rounded-full bg-[#eeeeee]"></span></div></div>
          <div class="h-[146px] rounded-[22px] border-[3px] border-[#efeeec] bg-white shadow-[0_2px_3px_rgba(0,0,0,0.08)] pl-[15px] pr-[14px] pt-[12px] pb-[14px] flex flex-col justify-between"><div><p class="text-[21px] leading-[24px] font-medium text-[#222]">от 6242&#8202;₽×24</p><p class="text-[16.7px] leading-[18px] text-[#8e8e8e]">Каждый месяц</p></div><div class="flex items-end justify-between"><p class="text-[16.7px] leading-[18px] text-[#8e8e8e]">Переплата<br>4990&#8202;₽</p><span class="w-[37px] h-[37px] rounded-full bg-[#eeeeee]"></span></div></div>
        </div>
      </div>
      <div class="mt-[30px] flex gap-[6px]"><span class="w-[260px] h-[9px] rounded-full bg-[#86cd97]"></span><span class="flex-1 h-[9px] rounded-full bg-[#d8d8d6]"></span><span class="flex-1 h-[9px] rounded-full bg-[#d8d8d6]"></span><span class="flex-1 h-[9px] rounded-full bg-[#d8d8d6]"></span><span class="flex-1 h-[9px] rounded-full bg-[#d8d8d6]"></span><span class="flex-1 h-[9px] rounded-full bg-[#d8d8d6]"></span></div>
      <div class="mt-[9px] flex gap-[6px]"><div class="w-[260px] shrink-0"><p class="text-[17px] leading-[20px] text-[#8e8e8e]">14.08</p><p class="text-[20px] leading-[22px] font-medium">23&#8202;332&#8202;₽</p></div><div class="whitespace-nowrap"><p class="text-[16.5px] leading-[20px] text-[#8e8e8e]">Дальше 5 платежей раз в месяц</p><p class="text-[20px] leading-[22px] font-medium">по 23&#8202;332&#8202;₽</p></div></div>
    </article>
  </section>
</main>
</body>
</html>
